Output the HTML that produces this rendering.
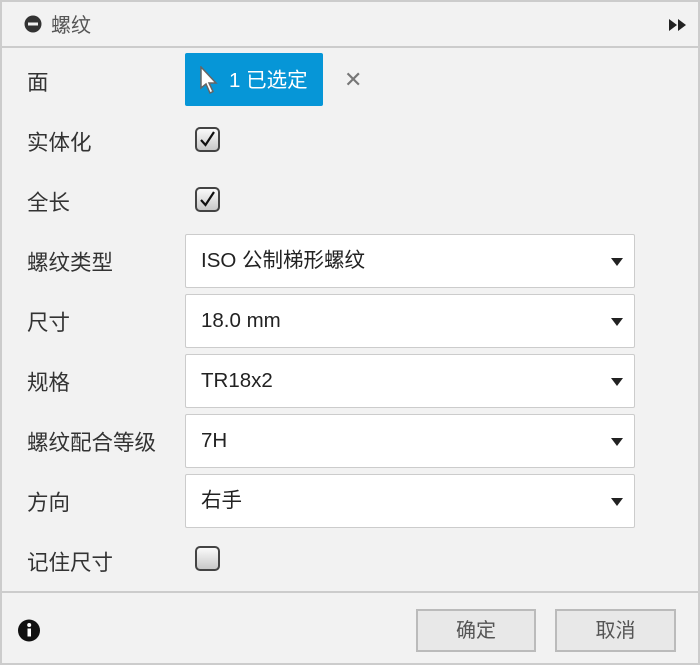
<!DOCTYPE html>
<html><head><meta charset="utf-8"><style>
*{box-sizing:border-box;margin:0;padding:0}
body{width:700px;height:665px;background:#f2f2f2;font-family:"Liberation Sans","Noto Sans CJK SC",sans-serif;position:relative;overflow:hidden}
.frame{position:absolute;left:0;top:0;width:700px;height:665px;border:2px solid #ccc}
.hdr{position:absolute;left:0;top:0;width:700px;height:48px;border-bottom:2px solid #ccc}
.hdr .t{position:absolute;left:51px;top:14px;font-size:20px;line-height:24px;color:#555}
.lbl{position:absolute;left:27px;font-size:21.5px;line-height:24px;color:#333;margin-top:3px}
.sel{position:absolute;left:185px;width:450px;height:54px;background:#fff;border:1px solid #ccc;border-radius:2px;font-size:20.5px;color:#222;padding-left:15px;display:flex;align-items:center;line-height:24px}
.sel:after{content:"";position:absolute;right:11px;top:23px;border-left:6px solid transparent;border-right:6px solid transparent;border-top:8px solid #222}
.cb{position:absolute;left:195px;width:25px;height:25px;border:2px solid #444;border-radius:5px;background:linear-gradient(#fafafa,#c8c8c8)}
.btn{position:absolute;top:609px;height:43px;border:2px solid #bbb;background:#e8e8e8;font-size:20px;color:#555;display:flex;align-items:center;justify-content:center;line-height:24px}
</style></head><body>
<div class="frame"></div>
<div class="hdr">
<svg style="position:absolute;left:24px;top:15px" width="18" height="18"><circle cx="9" cy="9" r="8.5" fill="#333"/><rect x="4" y="7.5" width="10" height="3" fill="#f2f2f2"/></svg>
<div class="t">螺纹</div>
<svg style="position:absolute;left:669px;top:19px" width="20" height="12"><path d="M0 0L8 6L0 12ZM9 0L17 6L9 12Z" fill="#222"/></svg>
</div>
<div class="lbl" style="top:68px">面</div>
<div style="position:absolute;left:185px;top:53px;width:138px;height:53px;background:#0696d7;border-radius:2px;color:#fff;font-size:20.5px;line-height:24px">
<svg style="position:absolute;left:14px;top:13px" width="20" height="30"><path d="M2 1L2 22L7 18L11 27L14 25.5L10 17L17 17Z" fill="#fff" stroke="#666" stroke-width="1.5"/></svg>
<span style="position:absolute;left:44px;top:16px">1 已选定</span></div>
<div style="position:absolute;left:344px;top:68px;font-size:22px;line-height:24px;color:#777">✕</div>
<div class="lbl" style="top:128px">实体化</div>
<div class="cb" style="top:127px"><svg width="21" height="21"><path d="M4 11L8.5 16L17 3" stroke="#111" stroke-width="2.2" fill="none"/></svg></div>
<div class="lbl" style="top:188px">全长</div>
<div class="cb" style="top:187px"><svg width="21" height="21"><path d="M4 11L8.5 16L17 3" stroke="#111" stroke-width="2.2" fill="none"/></svg></div>
<div class="lbl" style="top:248px">螺纹类型</div><div class="sel" style="top:234px">ISO 公制梯形螺纹</div>
<div class="lbl" style="top:308px">尺寸</div><div class="sel" style="top:294px">18.0 mm</div>
<div class="lbl" style="top:368px">规格</div><div class="sel" style="top:354px">TR18x2</div>
<div class="lbl" style="top:428px">螺纹配合等级</div><div class="sel" style="top:414px">7H</div>
<div class="lbl" style="top:488px">方向</div><div class="sel" style="top:474px">右手</div>
<div class="lbl" style="top:548px">记住尺寸</div>
<div class="cb" style="top:546px"></div>
<div style="position:absolute;left:0;top:591px;width:700px;height:2px;background:#ccc"></div>
<svg style="position:absolute;left:17px;top:619px" width="26" height="24"><ellipse cx="12" cy="11.5" rx="11" ry="11" fill="#111"/><rect x="10.5" y="9.5" width="3.5" height="8" fill="#fff"/><circle cx="12.2" cy="6" r="2" fill="#fff"/></svg>
<div class="btn" style="left:416px;width:120px">确定</div>
<div class="btn" style="left:555px;width:121px">取消</div>
</body></html>
